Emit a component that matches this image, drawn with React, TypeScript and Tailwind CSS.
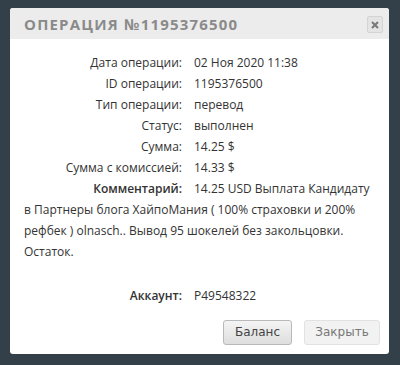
const rows: [string, string][] = [
  ['Дата операции:', '02 Ноя 2020 11:38'],
  ['ID операции:', '1195376500'],
  ['Тип операции:', 'перевод'],
  ['Статус:', 'выполнен'],
  ['Сумма:', '14.25 $'],
  ['Сумма с комиссией:', '14.33 $'],
];

export default function App() {
  return (
    <div className="w-[400px] h-[365px] bg-[#33404a] pt-2 pl-[10px] font-['Open_Sans',sans-serif]">
      <div className="w-[379px] h-[346px] bg-white rounded-[3px] overflow-hidden flex flex-col">
        <div className="h-[31px] bg-[#ececec] flex items-start justify-between pl-[14px] pr-[6px]">
          <span className="mt-[6px] text-[15px] leading-[20px] font-bold tracking-[0.08em] text-[#8a8a8a]">
            ОПЕРАЦИЯ №1195376500
          </span>
          <button className="mt-[8px] w-[16px] h-[17px] rounded-[2px] border border-[#d4d4d4] bg-[#e4e4e4] flex items-center justify-center text-[#777]">
            <svg width="8" height="8" viewBox="0 0 8 8">
              <path d="M1 1L7 7M7 1L1 7" stroke="currentColor" strokeWidth="2" />
            </svg>
          </button>
        </div>

        <div className="flex-1 pt-[13px] px-[14px] text-[12px] text-[#333] leading-[21px]">
          {rows.map(([k, v]) => (
            <div key={k} className="flex">
              <div className="w-[158px] text-right">{k}</div>
              <div className="pl-[12px]">{v}</div>
            </div>
          ))}
          <div>
            <span className="inline-block w-[158px] text-right font-semibold">Комментарий:</span>
            <span className="pl-[12px]">
              14.25 USD Выплата Кандидату в Партнеры блога ХайпоМания ( 100% страховки и 200% рефбек ) olnasch.. Вывод 95 шокелей без закольцовки. Остаток.
            </span>
          </div>
          <div className="flex mt-[23px]">
            <div className="w-[158px] text-right font-semibold">Аккаунт:</div>
            <div className="pl-[12px]">P49548322</div>
          </div>
          <div className="flex justify-end gap-[12px] mt-[14px] mr-[-5px] font-['DejaVu_Sans',sans-serif] text-[12px]">
            <button className="w-[69px] h-[25px] rounded-[3px] border border-[#b9b9b9] bg-gradient-to-b from-[#f4f4f4] to-[#dedede] text-[#444]">
              Баланс
            </button>
            <button className="w-[76px] h-[25px] rounded-[3px] border border-[#e2e2e2] bg-[#f2f2f2] text-[#777]">
              Закрыть
            </button>
          </div>
        </div>
      </div>
    </div>
  );
}
